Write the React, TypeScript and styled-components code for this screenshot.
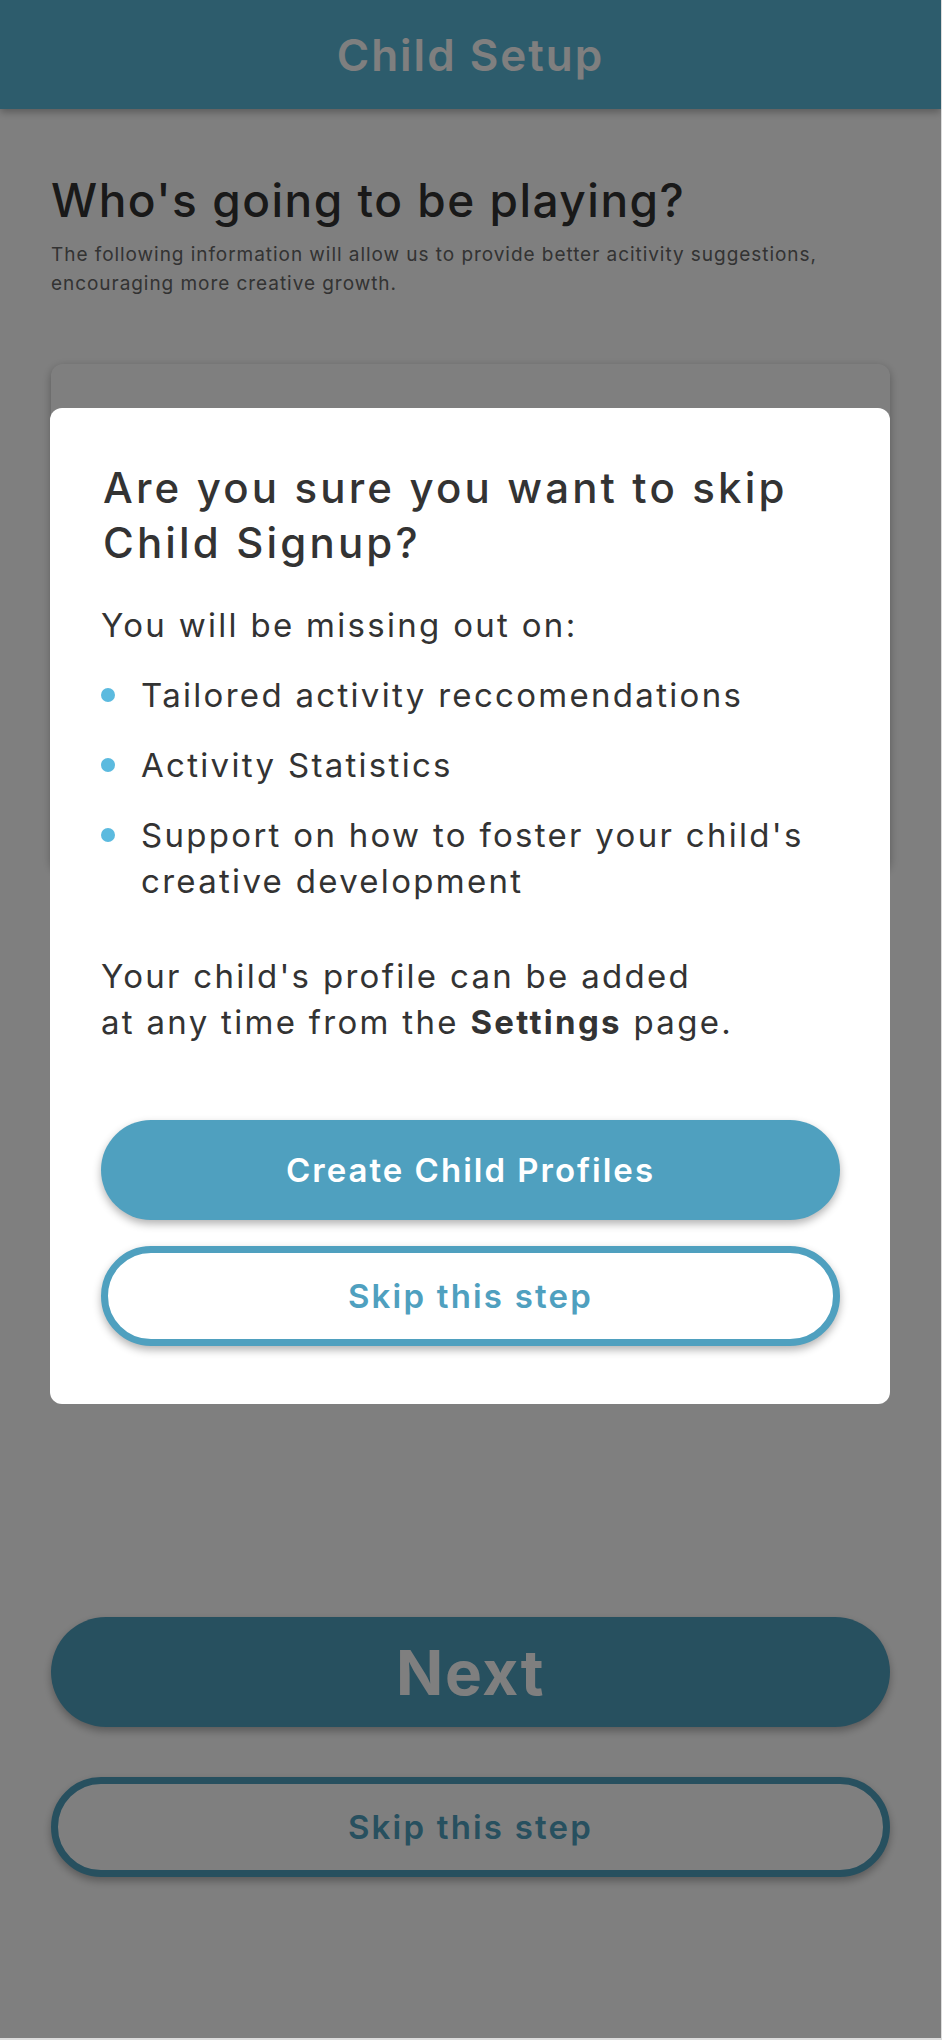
import React from "react";
import styled, { createGlobalStyle } from "styled-components";

const GlobalStyle = createGlobalStyle`
  html, body {
    margin: 0;
    padding: 0;
    background: #dcdcdc;
  }
  * { box-sizing: border-box; }
`;

const Screen = styled.div`
  position: relative;
  width: 941px;
  height: 2038px;
  background: #ffffff;
  overflow: hidden;
  font-family: Inter, "Liberation Sans", sans-serif;
`;

const Header = styled.header`
  height: 109px;
  background: #5ab8d8;
  display: flex;
  align-items: center;
  justify-content: center;
  box-shadow: 0 3px 8px rgba(0, 0, 0, 0.3);
`;

const HeaderTitle = styled.h1`
  margin: 0;
  color: #ffffff;
  font-size: 44px;
  font-weight: 600;
  letter-spacing: 2px;
`;

const Content = styled.main`
  display: flex;
  flex-direction: column;
  padding: 63px 51px 0 51px;
`;

const PageTitle = styled.h2`
  margin: 0;
  color: #333333;
  font-size: 46px;
  line-height: 56px;
  font-weight: 500;
  letter-spacing: 1.5px;
`;

const PageSubtitle = styled.p`
  margin: 12px 0 0 0;
  color: #666666;
  font-size: 19px;
  line-height: 29px;
  font-weight: 400;
  letter-spacing: 0.95px;
`;

const ChildCard = styled.section`
  margin-top: 66px;
  height: 506px;
  background: #ffffff;
  border-radius: 12px;
  box-shadow: 0 3px 10px rgba(0, 0, 0, 0.3);
`;

const PrimaryButton = styled.button<{ $big?: boolean }>`
  width: 100%;
  height: ${(p) => (p.$big ? "110px" : "100px")};
  border: none;
  border-radius: 60px;
  background: #4fa0bf;
  color: #ffffff;
  font-family: Inter, "Liberation Sans", sans-serif;
  font-size: ${(p) => (p.$big ? "62px" : "33px")};
  font-weight: ${(p) => (p.$big ? 700 : 600)};
  letter-spacing: ${(p) => (p.$big ? "1.6px" : "2px")};
  box-shadow: 0 4px 9px rgba(0, 0, 0, 0.3);
  display: flex;
  align-items: center;
  justify-content: center;
  padding: 0;
`;

const OutlineButton = styled.button`
  width: 100%;
  height: 100px;
  border: 7px solid #4fa0bf;
  border-radius: 60px;
  background: #ffffff;
  color: #4fa0bf;
  font-family: Inter, "Liberation Sans", sans-serif;
  font-size: 33px;
  font-weight: 600;
  letter-spacing: 2.2px;
  box-shadow: 0 4px 9px rgba(0, 0, 0, 0.3);
  display: flex;
  align-items: center;
  justify-content: center;
  padding: 0;
`;

const BottomActions = styled.div`
  margin-top: 747px;
  display: flex;
  flex-direction: column;
  gap: 50px;
`;

const Overlay = styled.div`
  position: absolute;
  inset: 0;
  background: rgba(0, 0, 0, 0.5);
  display: flex;
  flex-direction: column;
  align-items: stretch;
  padding: 408px 51px 0 50px;
`;

const Modal = styled.div`
  background: #ffffff;
  border-radius: 12px;
  padding: 52px 50px 58px 51px;
  display: flex;
  flex-direction: column;
  color: #333333;
`;

const ModalTitle = styled.h3`
  margin: 0 0 0 2px;
  font-size: 42px;
  line-height: 55px;
  font-weight: 500;
  letter-spacing: 3.15px;
  color: #333333;
`;

const BodyText = styled.p<{ $top: number }>`
  margin: ${(p) => p.$top}px 0 0 0;
  font-size: 33px;
  line-height: 46px;
  font-weight: 400;
  letter-spacing: 2.3px;
  color: #333333;
`;

const BulletList = styled.ul`
  list-style: none;
  margin: 24px 0 0 0;
  padding: 0;
  display: flex;
  flex-direction: column;
  gap: 24px;
`;

const BulletItem = styled.li`
  display: flex;
  align-items: flex-start;
  gap: 26px;
  font-size: 33px;
  line-height: 46px;
  letter-spacing: 2.3px;
  color: #333333;
`;

const Dot = styled.span`
  flex: 0 0 14px;
  width: 14px;
  height: 14px;
  margin-top: 16px;
  border-radius: 50%;
  background: #5bbadf;
`;

const ModalActions = styled.div`
  margin-top: 75px;
  display: flex;
  flex-direction: column;
  gap: 26px;
`;

const Strong = styled.strong`
  font-weight: 700;
`;

const bullets = [
  "Tailored activity reccomendations",
  "Activity Statistics",
  "Support on how to foster your child's creative development",
];

export default function App() {
  return (
    <>
      <GlobalStyle />
      <Screen>
        <Header>
          <HeaderTitle>Child Setup</HeaderTitle>
        </Header>
        <Content>
          <PageTitle>Who's going to be playing?</PageTitle>
          <PageSubtitle>
            The following information will allow us to provide better acitivity suggestions,
            <br />
            encouraging more creative growth.
          </PageSubtitle>
          <ChildCard />
          <BottomActions>
            <PrimaryButton $big>Next</PrimaryButton>
            <OutlineButton>Skip this step</OutlineButton>
          </BottomActions>
        </Content>
        <Overlay>
          <Modal>
            <ModalTitle>
              Are you sure you want to skip
              <br />
              Child Signup?
            </ModalTitle>
            <BodyText $top={32}>You will be missing out on:</BodyText>
            <BulletList>
              {bullets.map((b) => (
                <BulletItem key={b}>
                  <Dot />
                  <span>{b}</span>
                </BulletItem>
              ))}
            </BulletList>
            <BodyText $top={49}>
              Your child's profile can be added
              <br />
              at any time from the <Strong>Settings</Strong> page.
            </BodyText>
            <ModalActions>
              <PrimaryButton>Create Child Profiles</PrimaryButton>
              <OutlineButton>Skip this step</OutlineButton>
            </ModalActions>
          </Modal>
        </Overlay>
      </Screen>
    </>
  );
}
